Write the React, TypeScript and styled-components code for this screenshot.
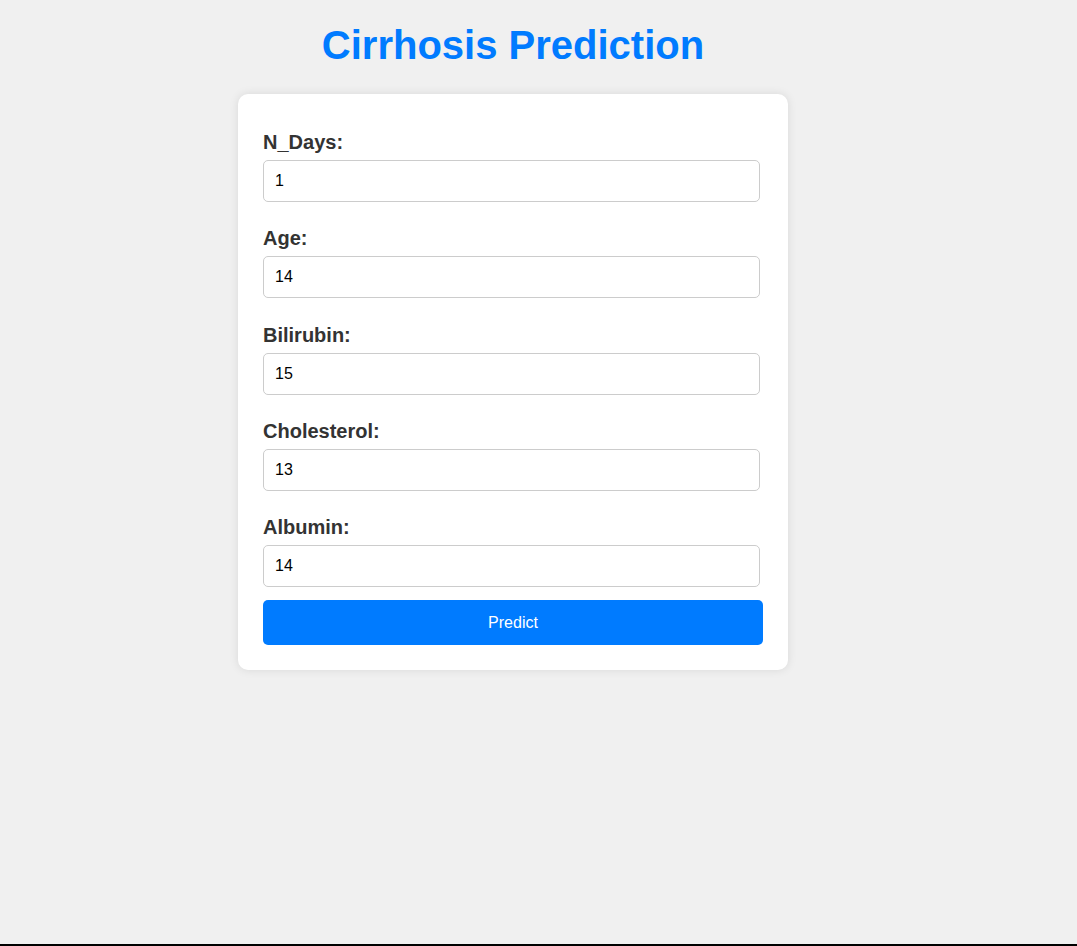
import React from "react";
import styled, { createGlobalStyle } from "styled-components";

const Global = createGlobalStyle`
  html, body { margin: 0; padding: 0; }
  body {
    background: #f0f0f0;
    font-family: "Liberation Sans", Arial, sans-serif;
  }
`;

const Page = styled.div`
  box-sizing: border-box;
  min-height: 100vh;
  width: 1077px;
  padding: 21.5px 51px 0 0;
  border-bottom: 2px solid #000;
  display: flex;
  flex-direction: column;
  align-items: center;
`;

const Title = styled.h1`
  margin: 0 0 26.5px;
  font-size: 40px;
  line-height: 46px;
  font-weight: bold;
  color: #007bff;
  text-align: center;
`;

const Card = styled.form`
  box-sizing: border-box;
  width: 550px;
  background: #fff;
  border-radius: 10px;
  padding: 25px;
  box-shadow: 0 0 10px rgba(0, 0, 0, 0.1);
  display: flex;
  flex-direction: column;
`;

const Field = styled.div`
  display: flex;
  flex-direction: column;
  align-items: flex-start;
  margin-bottom: 13.25px;
`;

const Label = styled.label`
  display: block;
  margin: 12px 0 6px;
  font-size: 20px;
  line-height: 23px;
  font-weight: bold;
  color: #333;
`;

const Input = styled.input`
  box-sizing: border-box;
  width: 497px;
  height: 42px;
  padding: 0 11px;
  border: 1px solid #ccc;
  border-radius: 5px;
  font-family: "Liberation Sans", Arial, sans-serif;
  font-size: 16px;
  color: #000;
  background: #fff;
  outline: none;
`;

const Button = styled.button`
  box-sizing: border-box;
  width: 100%;
  height: 45px;
  border: none;
  border-radius: 5px;
  background: #007bff;
  color: #fff;
  font-family: "Liberation Sans", Arial, sans-serif;
  font-size: 16px;
  cursor: pointer;
`;

const fields: [string, string][] = [
  ["N_Days", "1"],
  ["Age", "14"],
  ["Bilirubin", "15"],
  ["Cholesterol", "13"],
  ["Albumin", "14"],
];

export default function App() {
  return (
    <>
      <Global />
      <Page>
        <Title>Cirrhosis Prediction</Title>
        <Card onSubmit={(e) => e.preventDefault()}>
          {fields.map(([name, value]) => (
            <Field key={name}>
              <Label htmlFor={name}>{name}:</Label>
              <Input id={name} type="number" defaultValue={value} />
            </Field>
          ))}
          <Button type="submit">Predict</Button>
        </Card>
      </Page>
    </>
  );
}
